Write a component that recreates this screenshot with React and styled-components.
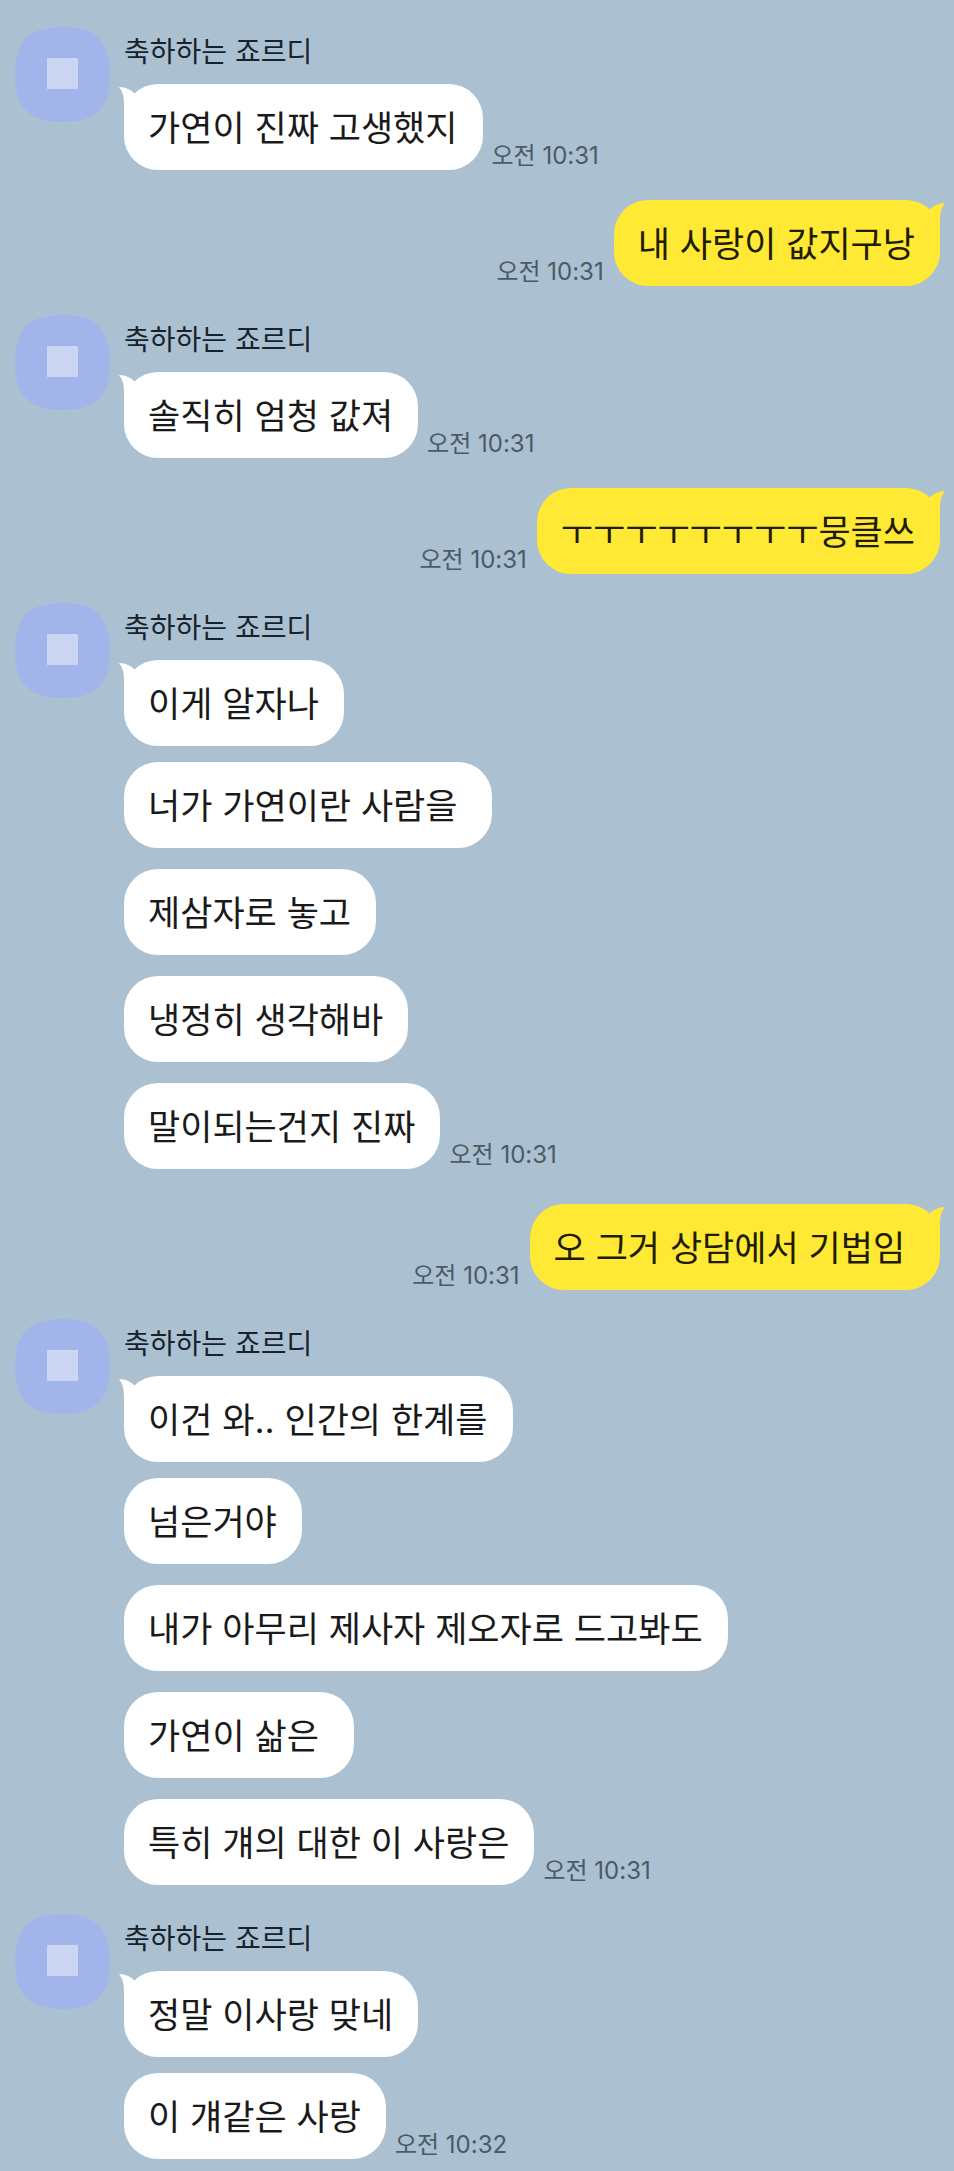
import React from "react";
import styled, { createGlobalStyle } from "styled-components";

const GlobalStyle = createGlobalStyle`
  body {
    margin: 0;
    background-color: #abc0d1;
    font-family: Inter, "Noto Sans CJK KR", sans-serif;
  }
`;

const Room = styled.main`
  display: flex;
  flex-direction: column;
  padding: 27px 14px 6px 15px;
`;

const Received = styled.section`
  display: grid;
  grid-template-columns: 95px 1fr;
  column-gap: 14px;
  align-items: start;

  & + & {
    margin-top: 24px;
  }
`;

const Sent = styled.section`
  display: flex;
  flex-direction: row-reverse;
  align-items: flex-end;
  gap: 10px;
  margin: 30px 0 29px;
`;

const AvatarIcon = styled.svg`
  display: block;
  width: 95px;
  height: 95px;
`;

const Sender = styled.h2`
  margin: 0 0 6px;
  font-size: 28px;
  font-weight: 400;
  line-height: 51px;
  color: #17222b;
`;

const MessageList = styled.ul`
  display: flex;
  flex-direction: column;
  gap: 16px;
  margin: 0;
  padding: 0;
  list-style: none;
`;

const MessageRow = styled.li`
  display: flex;
  align-items: flex-end;
  gap: 9px;

  & + & {
    padding-bottom: 5px;
  }
`;

const Bubble = styled.p`
  position: relative;
  margin: 0;
  padding: 19px 25px 17px 24px;
  border-radius: 34px;
  background-color: ${(props) => (props.$mine ? "#ffe934" : "#ffffff")};
  color: ${(props) => (props.$mine ? "#201c04" : "#1a1a1a")};
  font-size: 35px;
  line-height: 50px;
  white-space: pre-wrap;
`;

const TailIcon = styled.svg`
  position: absolute;
  top: 3px;
  ${(props) => (props.$mine ? "right: -5px;" : "left: -5px;")}
  width: 16px;
  height: 30px;
  fill: ${(props) => (props.$mine ? "#ffe934" : "#ffffff")};
`;

const Time = styled.time`
  flex-shrink: 0;
  font-size: 24px;
  line-height: 28px;
  color: #4c5a65;
`;

const chat = [
  { messages: ["가연이 진짜 고생했지"], time: "10:31" },
  { mine: true, messages: ["내 사랑이 값지구낭"], time: "10:31" },
  { messages: ["솔직히 엄청 값져"], time: "10:31" },
  { mine: true, messages: ["ㅜㅜㅜㅜㅜㅜㅜㅜ뭉클쓰"], time: "10:31" },
  {
    messages: [
      "이게 알자나",
      "너가 가연이란 사람을 ",
      "제삼자로 놓고",
      "냉정히 생각해바",
      "말이되는건지 진짜",
    ],
    time: "10:31",
  },
  { mine: true, messages: ["오 그거 상담에서 기법임 "], time: "10:31" },
  {
    messages: [
      "이건 와.. 인간의 한계를",
      "넘은거야",
      "내가 아무리 제사자 제오자로 드고봐도",
      "가연이 삶은 ",
      "특히 걔의 대한 이 사랑은",
    ],
    time: "10:31",
  },
  { messages: ["정말 이사랑 맞네", "이 걔같은 사랑"], time: "10:32" },
];

const Avatar = () => (
  <AvatarIcon viewBox="0 0 95 95" aria-hidden="true">
    <path
      fill="#a2b5ea"
      d="M47.5 0C81 0 95 14 95 47.5S81 95 47.5 95 0 81 0 47.5 14 0 47.5 0Z"
    />
    <rect x="32" y="31" width="31" height="31" fill="#ccd6f2" />
  </AvatarIcon>
);

const Tail = ({ mine }) => (
  <TailIcon $mine={mine} viewBox="0 0 16 30" aria-hidden="true">
    <path
      transform={mine ? "matrix(-1 0 0 1 16 0)" : undefined}
      d="M0 0C7 0 12 3 15.500 6.500L16 30H5V19C5 10 4 5 0 0Z"
    />
  </TailIcon>
);

const Message = ({ text, mine, first }) => (
  <Bubble $mine={mine}>
    {first && <Tail mine={mine} />}
    {text}
  </Bubble>
);

const SentMessage = ({ text, time }) => (
  <Sent>
    <Message text={text} mine first />
    <Time dateTime={time}>오전 {time}</Time>
  </Sent>
);

const ReceivedGroup = ({ messages, time }) => (
  <Received>
    <Avatar />
    <div>
      <Sender>축하하는 죠르디</Sender>
      <MessageList>
        {messages.map((text, i) => (
          <MessageRow key={text}>
            <Message text={text} first={i === 0} />
            {i === messages.length - 1 && (
              <Time dateTime={time}>오전 {time}</Time>
            )}
          </MessageRow>
        ))}
      </MessageList>
    </div>
  </Received>
);

export default function App() {
  return (
    <>
      <GlobalStyle />
      <Room>
        {chat.map((group, i) =>
          group.mine ? (
            <SentMessage key={i} text={group.messages[0]} time={group.time} />
          ) : (
            <ReceivedGroup key={i} messages={group.messages} time={group.time} />
          )
        )}
      </Room>
    </>
  );
}
